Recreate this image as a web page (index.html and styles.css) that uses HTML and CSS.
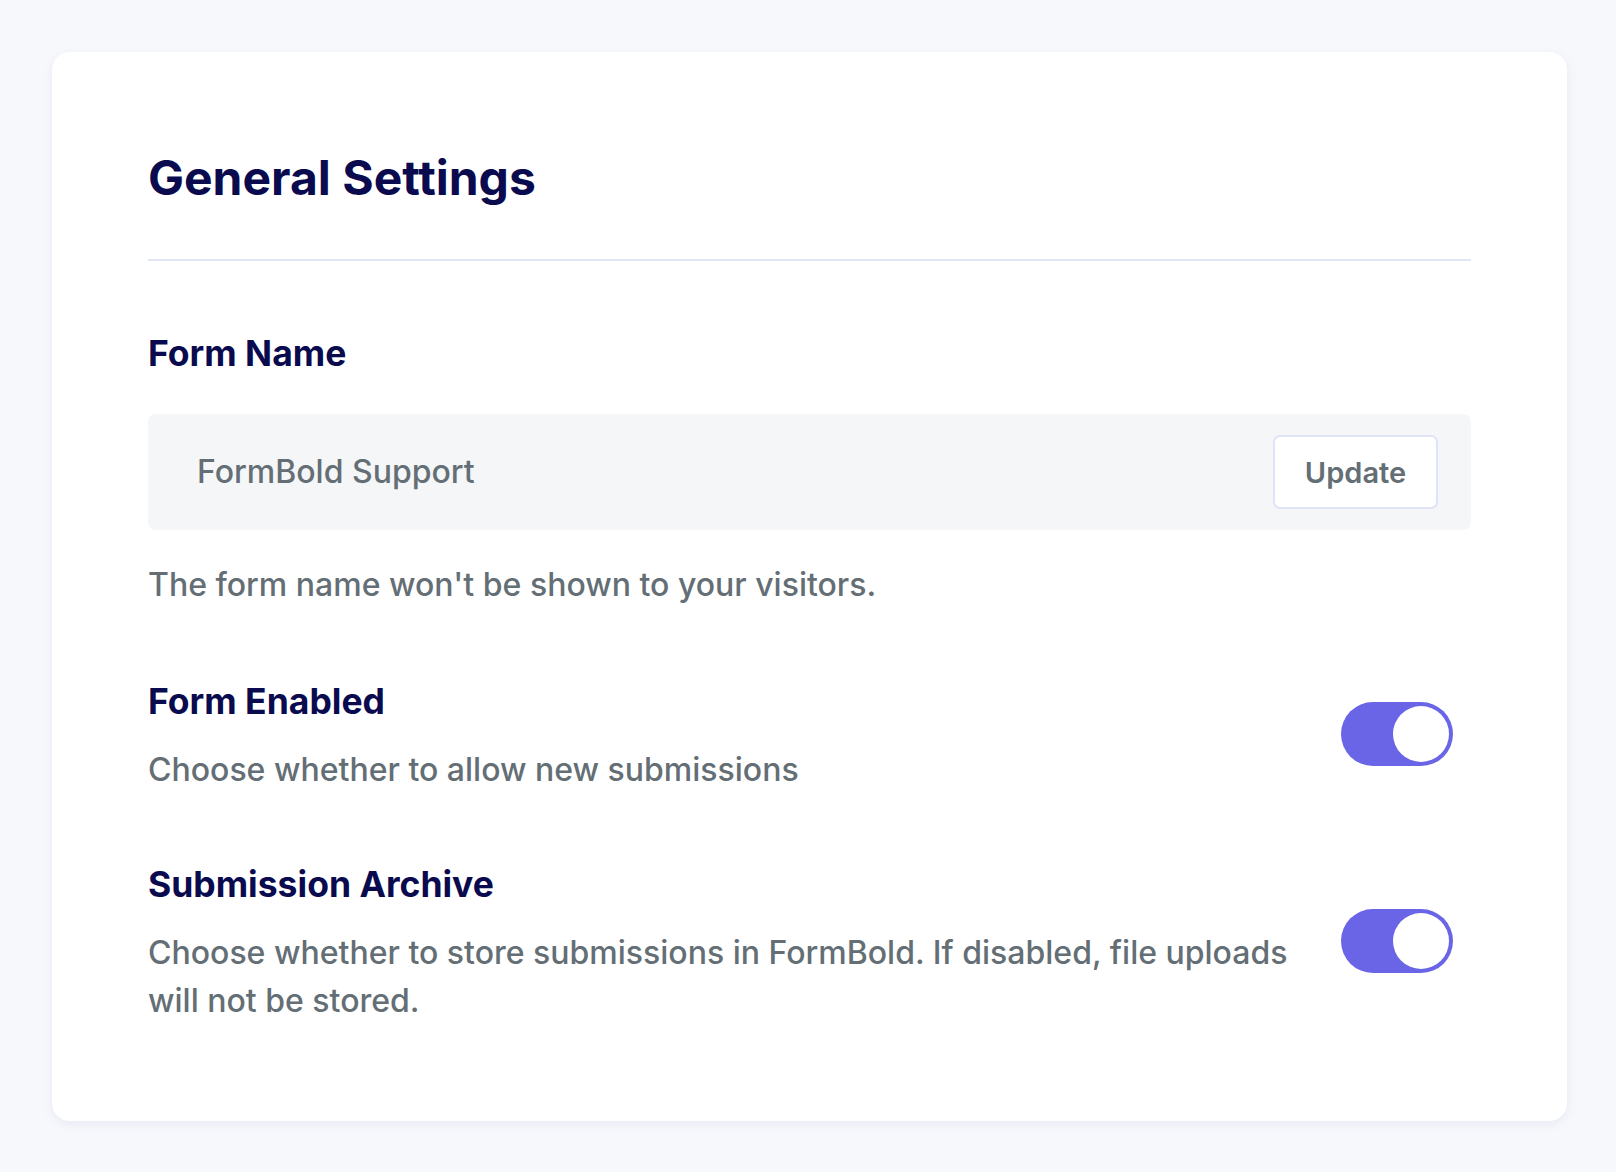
FILE: index.html
```html
<!DOCTYPE html>
<html lang="en">
<head>
<meta charset="utf-8">
<title>General Settings</title>
<link rel="stylesheet" href="styles.css">
</head>
<body>
<main class="page">
  <section class="card">
    <header class="card-header">
      <h1 class="card-title">General Settings</h1>
    </header>

    <div class="field">
      <h2 class="field-label">Form Name</h2>
      <div class="name-box">
        <span class="name-value">FormBold Support</span>
        <button class="btn-update" type="button">Update</button>
      </div>
      <p class="field-help">The form name won't be shown to your visitors.</p>
    </div>

    <div class="setting-row setting-row--first">
      <div class="setting-text">
        <h2 class="field-label">Form Enabled</h2>
        <p class="setting-desc">Choose whether to allow new submissions</p>
      </div>
      <span class="toggle is-on"><span class="toggle-knob"></span></span>
    </div>

    <div class="setting-row">
      <div class="setting-text">
        <h2 class="field-label">Submission Archive</h2>
        <p class="setting-desc">Choose whether to store submissions in FormBold. If disabled, file uploads will not be stored.</p>
      </div>
      <span class="toggle is-on"><span class="toggle-knob"></span></span>
    </div>
  </section>
</main>
</body>
</html>
```

FILE: styles.css
```css
* { box-sizing: border-box; }

html, body {
  margin: 0;
  padding: 0;
  background: #f7f8fc;
  font-family: Inter, "Noto Sans", "Liberation Sans", sans-serif;
}

.page {
  padding: 52px 49px 52px 52px;
}

.card {
  background: #ffffff;
  border-radius: 18px;
  box-shadow: 0 3px 8px rgba(190, 196, 225, 0.25);
  padding: 96px;
}

.card-header {
  padding-bottom: 51px;
  border-bottom: 2px solid #e1e5f5;
}

.card-title {
  margin: 0;
  font-size: 48px;
  line-height: 60px;
  font-weight: 700;
  color: #0a0a4e;
}

.field {
  margin-top: 73px;
}

.field-label {
  margin: 0;
  font-size: 35.5px;
  line-height: 40px;
  font-weight: 700;
  color: #0a0a4e;
}

.name-box {
  margin-top: 40px;
  display: flex;
  align-items: center;
  justify-content: space-between;
  background: #f5f6f7;
  border-radius: 8px;
  padding: 21px 33px 21px 49px;
}

.name-value {
  font-size: 32px;
  line-height: 40px;
  font-weight: 500;
  color: #646e75;
}

.btn-update {
  width: 165px;
  height: 74px;
  background: #ffffff;
  border: 2px solid #e1e3f8;
  border-radius: 7px;
  font-family: inherit;
  font-size: 29px;
  font-weight: 600;
  color: #646e75;
  cursor: pointer;
}

.field-help {
  margin: 31px 0 0;
  font-size: 32px;
  line-height: 48px;
  font-weight: 500;
  color: #646e75;
}

.setting-row {
  display: flex;
  align-items: center;
  justify-content: space-between;
  margin-top: 71px;
}

.setting-row--first {
  margin-top: 73px;
}

.setting-text {
  max-width: 1170px;
}

.setting-desc {
  margin: 24px 0 0;
  font-size: 32px;
  line-height: 48px;
  font-weight: 500;
  color: #646e75;
}

.toggle {
  flex: none;
  display: flex;
  align-items: center;
  justify-content: flex-end;
  width: 112px;
  height: 64px;
  margin-right: 18px;
  margin-bottom: 8px;
  padding: 4px;
  border-radius: 32px;
  background: #6a64e7;
}

.toggle-knob {
  width: 56px;
  height: 56px;
  border-radius: 50%;
  background: #ffffff;
}
```
